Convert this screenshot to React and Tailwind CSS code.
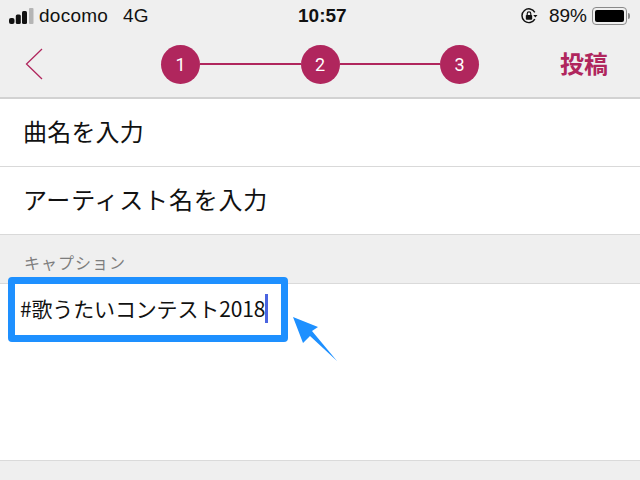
const jpFont = { fontFamily: '"Noto Sans CJK JP", "Liberation Sans", sans-serif' };

function StatusBar() {
  return (
    <div className="relative flex h-[32px] items-center justify-between pl-[9px] pr-[10px] text-[19px] text-[#111] font-['Liberation_Sans',sans-serif]">
      <div className="flex items-center">
        <svg width="25" height="17" viewBox="0 0 25 17" fill="none">
          <rect x="0" y="10" width="5.5" height="6" rx="2" fill="#111" />
          <rect x="6.8" y="6.5" width="5" height="9.5" rx="1.5" fill="#111" />
          <rect x="13" y="3" width="5" height="13" rx="1.5" fill="#111" />
          <rect x="20" y="0" width="4.5" height="16" rx="1" fill="#b5b5b5" />
        </svg>
        <span className="ml-[5px] tracking-[0.25px]">docomo</span>
        <span className="ml-[15px]">4G</span>
      </div>
      <div className="flex items-center">
        <svg width="18" height="18" viewBox="0 0 17 17" fill="none">
          <path d="M14 11.5A6.5 6.5 0 1 1 14 5" stroke="#111" strokeWidth="1.4" />
          <path d="M12.5 7.5h4l-2 2.5z" fill="#111" />
          <rect x="5.5" y="7.5" width="6" height="4.5" rx="0.8" fill="#111" />
          <path d="M6.8 7.5V6.3a1.7 1.7 0 0 1 3.4 0v1.2" stroke="#111" strokeWidth="1.1" />
        </svg>
        <span className="ml-[11px]">89%</span>
        <div className="ml-[5px] flex items-center">
          <div className="flex h-[18px] w-[35px] rounded-[4px] border border-[#8a8a8a] p-[2px]">
            <div className="flex-1 rounded-[2px] bg-black" />
          </div>
          <div className="ml-[1px] h-[6px] w-[2px] rounded-r-[2px] bg-[#8a8a8a]" />
        </div>
      </div>
      <span className="absolute left-[298px] top-[2px] text-[19px] font-bold">10:57</span>
    </div>
  );
}

function Step({ number }) {
  return (
    <div className="flex h-[39px] w-[39px] shrink-0 items-center justify-center rounded-full bg-[#b0265d] text-[18px] text-white font-['Roboto',sans-serif]">
      {number}
    </div>
  );
}

function NavBar() {
  return (
    <div className="flex h-[67px] items-center border-b-2 border-[#d2d2d2] pb-[1px]">
      <div className="w-[161px] shrink-0 pl-[25px]">
        <svg width="18" height="32" viewBox="0 0 18 32" fill="none" className="block">
          <path d="M17 1L1.5 16L17 31" stroke="#b0265d" strokeWidth="1.3" />
        </svg>
      </div>
      <div className="flex w-[318px] shrink-0 items-center">
        <Step number="1" />
        <div className="h-[2px] flex-1 bg-[#b0265d]" />
        <Step number="2" />
        <div className="h-[2px] flex-1 bg-[#b0265d]" />
        <Step number="3" />
      </div>
      <div className="flex-1 pb-[2px] pl-[81px] text-[24px] font-bold leading-none text-[#b0265d]" style={jpFont}>
        投稿
      </div>
    </div>
  );
}

function Row({ label, tracking }) {
  return (
    <div className={`flex h-[68px] items-center border-b border-[#d9d9d9] bg-white pb-[4px] pl-[23px] text-[24px] text-[#111] ${tracking}`} style={jpFont}>
      {label}
    </div>
  );
}

export default function App() {
  return (
    <div className="relative h-[480px] w-[640px] overflow-hidden bg-[#efefef]">
      <StatusBar />
      <NavBar />
      <Row label="曲名を入力" tracking="tracking-[0.2px]" />
      <Row label="アーティスト名を入力" tracking="tracking-[0.8px]" />
      <div className="flex h-[49px] items-start border-b border-[#dadada] pl-[24px] pt-[16px] text-[16px] leading-[22px] tracking-[1px] text-[#7d7d7d]" style={jpFont}>
        キャプション
      </div>
      <div className="h-[177px] border-b border-[#dadada] bg-white" />

      <div className="absolute left-[8px] top-[277px] flex h-[65px] w-[280px] items-center rounded-[4px] border-[7px] border-[#1e90ff] bg-white pb-[2px] pl-[5px] text-[21px] leading-none text-[#111]" style={jpFont}>
        <span className="whitespace-nowrap tracking-[-0.15px]">#歌うたいコンテスト2018</span>
        <span className="ml-0 h-[29px] w-[3px] shrink-0 bg-[#4a64e0]" />
      </div>

      <svg className="absolute left-[288px] top-[312px]" width="56" height="56" viewBox="0 0 56 56">
        <path d="M5 5L30 15L24 19L49 49L22 24L15 31Z" fill="#1e90ff" />
      </svg>
    </div>
  );
}
